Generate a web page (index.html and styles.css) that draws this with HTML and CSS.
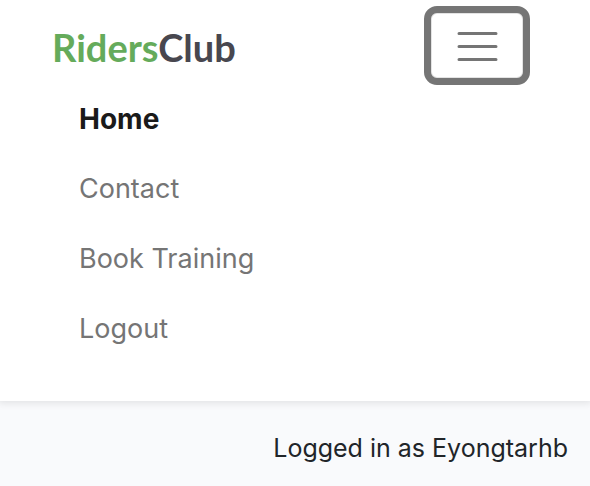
FILE: index.html
```html
<!DOCTYPE html>
<html lang="en">
<head>
<meta charset="utf-8">
<meta name="viewport" content="width=device-width, initial-scale=1">
<title>RidersClub</title>
<link rel="stylesheet" href="styles.css">
</head>
<body>
<header class="navbar">
  <div class="bar">
    <a class="brand" href="#"><span class="brand-accent">Riders</span>Club</a>
    <button class="toggler" type="button" aria-label="Toggle navigation" aria-expanded="true">
      <svg class="toggler-icon" viewBox="0 0 60 60" aria-hidden="true"><path d="M12 17.5H49M12 30.5H49M12 43.5H49" fill="none" stroke="#757575" stroke-width="3" stroke-linecap="round"/></svg>
    </button>
  </div>
  <nav class="menu">
    <a class="link active" href="#">Home</a>
    <a class="link" href="#">Contact</a>
    <a class="link" href="#">Book Training</a>
    <a class="link" href="#">Logout</a>
  </nav>
</header>
<main class="status">Logged in as Eyongtarhb</main>
</body>
</html>
```
FILE: styles.css
```css
* { box-sizing: border-box; }
body {
  margin: 0;
  min-height: 100vh;
  display: flex;
  flex-direction: column;
  background: #f9fafc;
  color: #212529;
  font-family: Inter, "Liberation Sans", sans-serif;
  font-size: 25px;
}
.navbar {
  background: #fff;
  padding: 6px 60px 36px 52px;
  box-shadow: 0 0 8px 2px rgba(0, 0, 0, 0.1);
}
.bar {
  display: flex;
  align-items: center;
  justify-content: space-between;
}
.brand {
  padding-top: 2px;
  color: #48474f;
  font-family: Lato, sans-serif;
  font-size: 38px;
  font-weight: 700;
  line-height: 48px;
  text-decoration: none;
}
.brand-accent { color: #65ab5b; }
.toggler {
  display: flex;
  align-items: center;
  justify-content: center;
  width: 106px;
  height: 79px;
  padding: 0;
  background: #fff;
  border: 7px solid #757575;
  border-radius: 13px;
  box-shadow: inset 0 0 0 1px #e3e3e3;
}
.toggler-icon {
  width: 60px;
  height: 60px;
}
.menu {
  display: flex;
  flex-direction: column;
  align-items: flex-start;
  padding-left: 27px;
  font-size: 27px;
}
.link {
  padding: 13px 0 15px;
  color: #757575;
  line-height: 42px;
  text-decoration: none;
}
.link.active {
  color: #1a1a1a;
  font-size: 28px;
  font-weight: 700;
}
.status {
  padding: 26px 22px 17px;
  line-height: 42px;
  text-align: right;
}
```
